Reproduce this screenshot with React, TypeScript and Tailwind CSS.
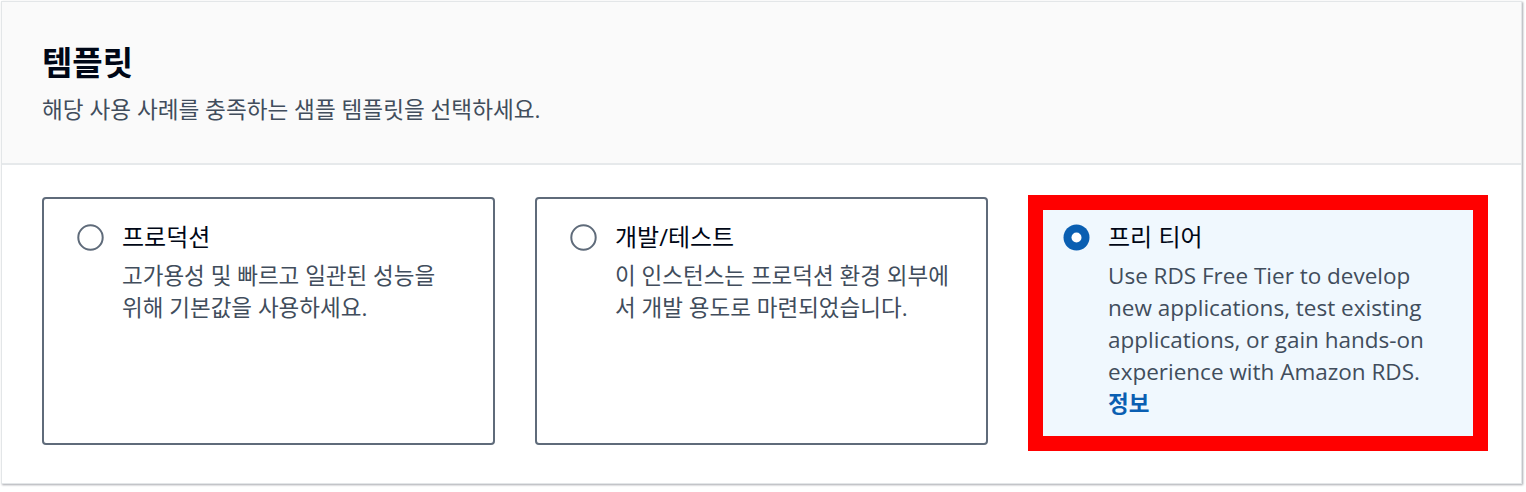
import React from 'react';

type Tile = {
  title: string;
  lines: string[];
  selected?: boolean;
  link?: string;
};

const tiles: Tile[] = [
  { title: '프로덕션', lines: ['고가용성 및 빠르고 일관된 성능을', '위해 기본값을 사용하세요.'] },
  { title: '개발/테스트', lines: ['이 인스턴스는 프로덕션 환경 외부에', '서 개발 용도로 마련되었습니다.'] },
  {
    title: '프리 티어',
    lines: [
      'Use RDS Free Tier to develop',
      'new applications, test existing',
      'applications, or gain hands-on',
      'experience with Amazon RDS.',
    ],
    selected: true,
    link: '정보',
  },
];

function Radio({ checked }: { checked?: boolean }) {
  // radio dot, drawn rather than using an input so the look is fixed
  return (
    <svg width="27" height="27" viewBox="0 0 27 27" className="shrink-0">
      {checked ? (
        <>
          <circle cx="13.5" cy="13.5" r="13" fill="#0a5fb2" />
          <circle cx="13.5" cy="13.5" r="5" fill="#ffffff" />
        </>
      ) : (
        <circle cx="13.5" cy="13.5" r="12.2" fill="#ffffff" stroke="#5f6b7a" strokeWidth="2" />
      )}
    </svg>
  );
}

function TileCard({ tile }: { tile: Tile }) {
  return (
    <div
      className={`relative h-[248px] rounded-[4px] border-2 pl-[33px] pr-4 pt-[22px] ${
        tile.selected ? 'border-[#0a5fb2] bg-[#f0f8fe]' : 'border-[#5f6b7a] bg-white'
      }`}
    >
      <div className="flex items-start gap-[18px]">
        <div className="flex h-[32px] items-center">
          <Radio checked={tile.selected} />
        </div>
        <div className="flex flex-col">
          <div className="text-[24px] leading-[32px] text-[#000716]">{tile.title}</div>
          <div className="mt-[7px] text-[22.5px] leading-[32px] text-[#414d5c]">
            {tile.lines.map((l) => (
              <div key={l} className="whitespace-nowrap">{l}</div>
            ))}
            {tile.link && (
              <div className="font-bold text-[#0a5fb2]">{tile.link}</div>
            )}
          </div>
        </div>
      </div>
      {/* red highlight annotation over the selected tile */}
      {tile.selected && (
        <div className="pointer-events-none absolute -left-[2px] -top-[4px] -right-[9px] -bottom-[8px] border-[15px] border-[#ff0000]" />
      )}
    </div>
  );
}

export default function App() {
  return (
    <div className="h-[492px] w-[1526px] bg-white font-['Open_Sans','Noto_Sans_CJK_KR',sans-serif]">
      <div className="ml-px mt-px w-[1521px] border border-[#e3e6e8] bg-white shadow-[1px_1px_2px_rgba(0,7,22,0.35)]">
        <div className="border-b-2 border-[#e6e9eb] bg-[#fafafa] pl-[40px] pt-[41px] pb-[37px]">
          <h2 className="text-[33px] font-bold leading-[40px] text-[#000716]">템플릿</h2>
          <p className="mt-[11px] text-[22.6px] leading-[32px] text-[#414d5c]">
            해당 사용 사례를 충족하는 샘플 템플릿을 선택하세요.
          </p>
        </div>
        <div className="grid grid-cols-3 gap-[40px] px-[40px] pt-[32px] pb-[38px]">
          {tiles.map((t) => (
            <TileCard key={t.title} tile={t} />
          ))}
        </div>
      </div>
    </div>
  );
}
